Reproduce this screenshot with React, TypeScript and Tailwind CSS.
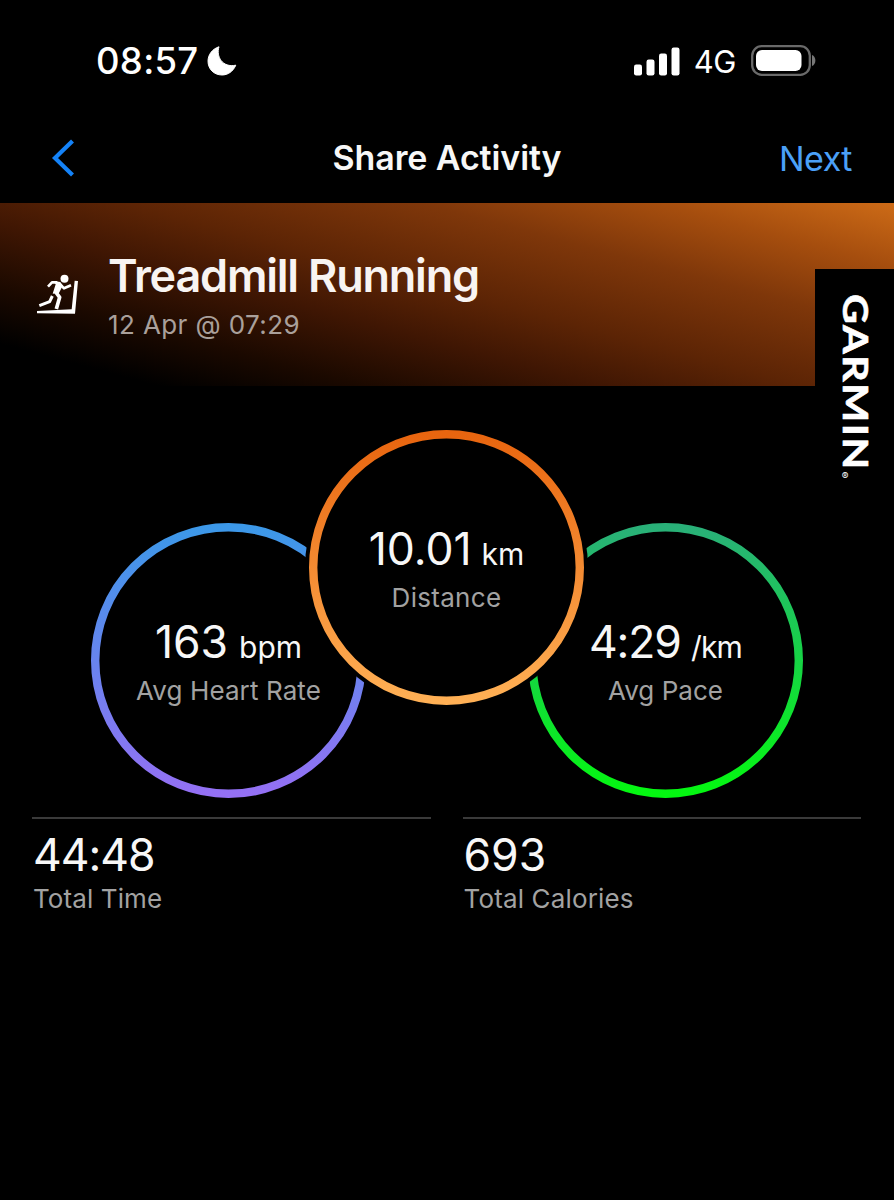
import React from "react";

type RingProps = {
  id: string;
  from: string;
  to: string;
  value: string;
  unit: string;
  label: string;
  className: string;
  valueClass: string;
  unitClass: string;
  labelClass: string;
  front?: boolean;
};

function Ring({ id, from, to, value, unit, label, className, valueClass, unitClass, labelClass, front }: RingProps) {
  return (
    <div className={`relative h-[275px] w-[275px] shrink-0 ${className}`}>
      <svg className="absolute inset-0 overflow-visible" width="275" height="275" viewBox="0 0 275 275">
        <defs>
          <linearGradient id={id} x1="0" y1="0" x2="0" y2="1">
            <stop offset="0" stopColor={from} />
            <stop offset="1" stopColor={to} />
          </linearGradient>
        </defs>
        {front && <circle cx="137.5" cy="137.5" r="141.5" fill="#000" />}
        <circle cx="137.5" cy="137.5" r="133.3" fill="none" stroke={`url(#${id})`} strokeWidth="8.4" />
      </svg>
      <div className="relative flex flex-col items-center pt-[89px]">
        <div className="flex h-[60px] items-baseline whitespace-nowrap leading-[60px] text-[#f7f7f7]">
          <span className={`text-[44.5px] ${valueClass}`}>{value}</span>
          <span className={`text-[30px] ${unitClass}`}>{unit}</span>
        </div>
        <div className={`h-[38px] whitespace-nowrap text-[26px] leading-[38px] text-[#a2a2a2] ${labelClass}`}>{label}</div>
      </div>
    </div>
  );
}

function Stat({ value, label, valueClass, labelClass }: { value: string; label: string; valueClass: string; labelClass: string }) {
  return (
    <div className="flex-1 border-t-2 border-[#3a3a3a] pl-px pt-[11px]">
      <div className={`text-[44.5px] leading-[50px] text-[#f7f7f7] ${valueClass}`}>{value}</div>
      <div className={`text-[26px] leading-[37px] text-[#a2a2a2] ${labelClass}`}>{label}</div>
    </div>
  );
}

export default function App() {
  return (
    <div className="flex h-[1200px] w-[894px] flex-col overflow-hidden bg-black font-['Inter',sans-serif] text-white">
      <div className="flex h-[122px] items-center pl-[96px] pr-[77px]">
        <span className="text-[36.5px] font-medium leading-[44px] tracking-[0.3px]">08:57</span>
        <svg className="ml-[8px]" width="30" height="30" viewBox="0 0 30 30">
          <path d="M12 0.8C8.8 10.5 15.5 22 28.8 19.2C26 25.5 21 29 15 29C7 29 1 23 1 15.2C1 8.500 5.500 2.800 12 0.800Z" fill="#fff" stroke="#fff" strokeWidth="1" strokeLinejoin="round" />
        </svg>
        <div className="ml-auto flex items-center">
          <svg width="46" height="29" viewBox="0 0 46 29" fill="#fff">
            <rect x="0" y="17.500" width="8" height="11" rx="2.200" />
            <rect x="12.500" y="12.500" width="8" height="16" rx="2.200" />
            <rect x="25" y="6.500" width="8" height="22" rx="2.200" />
            <rect x="37.500" y="0.500" width="8" height="28" rx="2.200" />
          </svg>
          <span className="ml-[14px] pt-0.5 text-[31px] leading-[40px] tracking-[-0.5px]">4G</span>
          <svg className="ml-[15px]" width="66" height="32" viewBox="0 0 66 32">
            <rect x="1.200" y="1.200" width="57.600" height="28.600" rx="9.500" fill="none" stroke="#6a6a6a" strokeWidth="2.300" />
            <rect x="5" y="5" width="45.500" height="21" rx="6" fill="#fff" />
            <path d="M61 10C65.500 11.500 65.500 19.500 61 21Z" fill="#777" />
          </svg>
        </div>
      </div>

      <div className="grid h-[81px] grid-cols-3 items-start">
        <svg className="ml-[51px] mt-[17px]" width="26" height="38" viewBox="0 0 26 38">
          <path d="M21.500 2L4 19L21.500 36" fill="none" stroke="#1482f7" strokeWidth="4.200" />
        </svg>
        <div className="whitespace-nowrap text-center text-[34px] font-semibold leading-[72px] tracking-[-0.1px] text-[#f7f7f7]">Share Activity</div>
        <div className="pr-[42px] text-right text-[34px] leading-[73px] tracking-[-0.5px] text-[#4ba0f8]">Next</div>
      </div>

      <div className="relative flex h-[183px] shrink-0 bg-[linear-gradient(15deg,#000_10%,#1b0900_23%,#3f1603_38%,#5c2405_51%,#7f370a_70%,#a64e0e_85%,#cd6b17_100%)]">
        <svg className="ml-[36px] mt-[70px]" width="43" height="42" viewBox="48 70 129 126" fill="#fff">
          <circle cx="133.500" cy="87" r="12" />
          <path d="M164 93L174 94L165 192L51 191L51 184L155 179Z" />
          <path d="M100 94L121 97L128 108L117 130L98 132L107 104Z" />
          <g fill="none" stroke="#fff" strokeLinejoin="round">
            <path d="M84 111L96 98L112 98" strokeWidth="8" />
            <path d="M121 104L132 116L153 107" strokeWidth="8" />
            <path d="M105 124L119 143L109 178" strokeWidth="11" />
            <path d="M97 139L89 156L58 168" strokeWidth="9" />
          </g>
        </svg>
        <div className="ml-[29px] pt-[46px]">
          <div className="text-[45px] font-semibold leading-[54px] tracking-[-1.22px] text-[#f8f4f2]">Treadmill Running</div>
          <div className="text-[26px] leading-[44px] tracking-[0.4px] text-[#aaa09b]">12 Apr @ 07:29</div>
        </div>
        <div className="absolute right-0 top-[66px] h-[220px] w-[79px] bg-black">
          <div className="absolute left-[22px] top-[25px] origin-top scale-y-[1.215] text-[34px] font-bold leading-[38px] tracking-[1.2px] [-webkit-text-stroke:0.6px_#fff] [writing-mode:vertical-rl] font-['Lato',sans-serif]">GARMIN</div>
          <span className="absolute left-[25px] top-[201px] text-[10px] leading-[10px] [writing-mode:vertical-rl]">®</span>
        </div>
      </div>

      <div className="flex pl-[91px] pt-[44px]">
        <Ring id="heart" from="#3c98e8" to="#9470f4" value="163" unit="bpm" label="Avg Heart Rate" className="mt-[93px]" valueClass="" unitClass="ml-[11px]" labelClass="tracking-[0.1px]" />
        <Ring id="distance" from="#e8650f" to="#ffb055" value="10.01" unit="km" label="Distance" className="z-10 -ml-[57px] -mr-[56px]" valueClass="" unitClass="ml-[10px]" labelClass="tracking-[0.3px]" front />
        <Ring id="pace" from="#29b078" to="#04f711" value="4:29" unit="/km" label="Avg Pace" className="mt-[93px]" valueClass="tracking-[-1.1px]" unitClass="ml-[10px] tracking-[-0.8px]" labelClass="tracking-[0.05px]" />
      </div>

      <div className="mt-[19px] flex gap-[32px] pl-[32px] pr-[33px]">
        <Stat value="44:48" label="Total Time" valueClass="tracking-[-1px]" labelClass="tracking-[0.1px]" />
        <Stat value="693" label="Total Calories" valueClass="" labelClass="tracking-[0.15px]" />
      </div>
    </div>
  );
}
